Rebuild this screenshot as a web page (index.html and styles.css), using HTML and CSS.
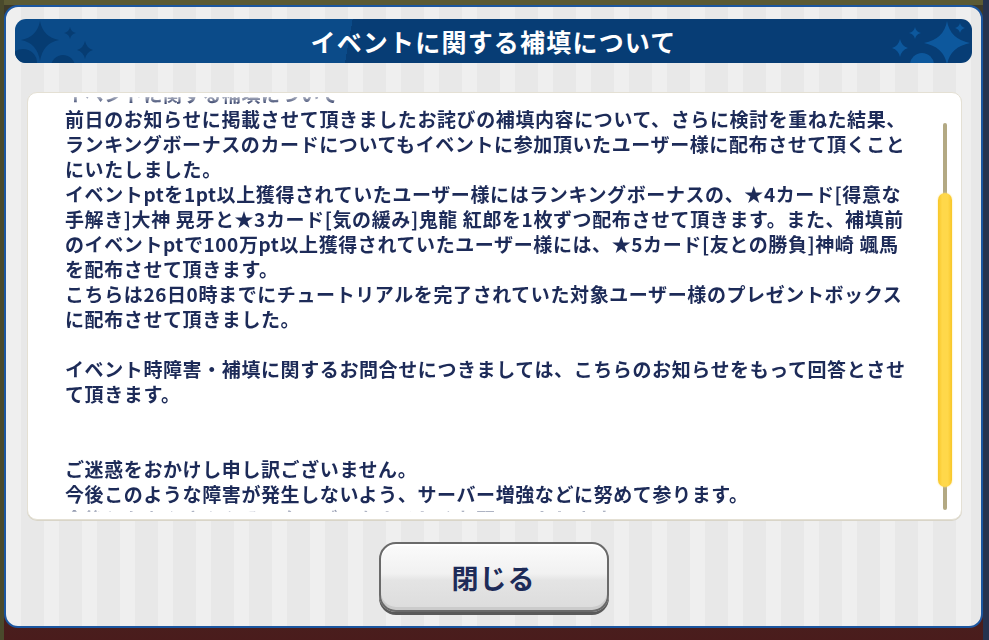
FILE: index.html
```html
<!DOCTYPE html>
<html lang="ja">
<head>
<meta charset="utf-8">
<title>イベントに関する補填について</title>
<link rel="stylesheet" href="styles.css">
</head>
<body>
<div class="scene">
  <div class="dialog">
    <div class="header">
      <svg class="sparkles" width="90" height="44" viewBox="0 0 90 44">
        <g fill="#063c72">
          <circle cx="8" cy="44" r="14"/>
          <circle cx="48" cy="48" r="12"/>
          <path d="M25 2 Q28 18 44 21 Q28 24 25 42 Q22 24 6 21 Q22 18 25 2Z"/>
          <path d="M55 8 Q56 13 61 14 Q56 15 55 20 Q54 15 49 14 Q54 13 55 8Z"/>
          <path d="M70 22 Q71.5 29 78 31 Q71.5 33 70 40 Q68.5 33 62 31 Q68.5 29 70 22Z"/>
        </g>
      </svg>
      <h1 class="title">イベントに関する補填について</h1>
      <svg class="sparkles" width="90" height="44" viewBox="0 0 90 44">
        <g fill="#0d589d">
          <circle cx="40" cy="46" r="12"/>
          <path d="M65 2 Q68 20 88 24 Q68 28 65 46 Q62 28 42 24 Q62 20 65 2Z"/>
          <path d="M33 8 Q34 13 39 14 Q34 15 33 20 Q32 15 27 14 Q32 13 33 8Z"/>
          <path d="M18 20 Q19.5 27 26 29 Q19.5 31 18 38 Q16.5 31 10 29 Q16.5 27 18 20Z"/>
          <path d="M78 4 Q79 8 83 9 Q79 10 78 14 Q77 10 73 9 Q77 8 78 4Z"/>
        </g>
      </svg>
    </div>

    <div class="panel">
      <div class="viewport">
        <div class="notice">
          イベントに関する補填について<br>
          前日のお知らせに掲載させて頂きましたお詫びの補填内容について、さらに検討を重ねた結果、<br>
          ランキングボーナスのカードについてもイベントに参加頂いたユーザー様に配布させて頂くこと<br>
          にいたしました。<br>
          イベントptを1pt以上獲得されていたユーザー様にはランキングボーナスの、★4カード[得意な<br>
          手解き]大神 晃牙と★3カード[気の緩み]鬼龍 紅郎を1枚ずつ配布させて頂きます。また、補填前<br>
          のイベントptで100万pt以上獲得されていたユーザー様には、★5カード[友との勝負]神崎 颯馬<br>
          を配布させて頂きます。<br>
          こちらは26日0時までにチュートリアルを完了されていた対象ユーザー様のプレゼントボックス<br>
          に配布させて頂きました。<br>
          <br>
          イベント時障害・補填に関するお問合せにつきましては、こちらのお知らせをもって回答とさせ<br>
          て頂きます。<br>
          <br>
          <br>
          ご迷惑をおかけし申し訳ございません。<br>
          今後このような障害が発生しないよう、サーバー増強などに努めて参ります。<br>
          今後ともあんさんぶるスターズ！をよろしくお願いいたします。
        </div>
      </div>
      <div class="scrollbar">
        <div class="track"></div>
        <div class="thumb"></div>
      </div>
    </div>

    <div class="footer">
      <button class="close-btn" type="button">閉じる</button>
    </div>
  </div>
</div>
</body>
</html>
```

FILE: styles.css
```css
html, body {
  margin: 0;
  padding: 0;
}

body {
  width: 989px;
  height: 640px;
  overflow: hidden;
  font-family: "Noto Sans CJK JP", "Noto Sans", sans-serif;
}

/* game scene showing around the modal */
.scene {
  width: 989px;
  height: 640px;
  padding: 5px 6px 0 4px;
  box-sizing: border-box;
  background:
    linear-gradient(90deg, #4a4a2c 0 4px, transparent 4px calc(100% - 6px), #26334f calc(100% - 6px)),
    linear-gradient(180deg, #5b5a34 0 5px, #3d3a2a 5px 60%, #4a1c1c 100%);
}

.dialog {
  width: 979px;
  height: 623px;
  box-sizing: border-box;
  border: 2px solid #1b56a0;
  border-radius: 14px;
  padding: 12px 9px 0 9px;
  background: repeating-linear-gradient(90deg, #efefef 0 15px, #e8e8e8 15px 38px);
  display: flex;
  flex-direction: column;
}

/* title bar */
.header {
  height: 44px;
  border-radius: 11px;
  background: linear-gradient(100deg, #0b4b89 0 35%, #073d75 35% 100%);
  display: flex;
  align-items: stretch;
  overflow: hidden;
  flex-shrink: 0;
}

.sparkles {
  flex: 0 0 90px;
  display: block;
}

.title {
  flex: 1;
  margin: 0;
  text-align: center;
  color: #ffffff;
  font-size: 25px;
  font-weight: 700;
  letter-spacing: 1.2px;
  line-height: 44px;
}

/* white message panel */
.panel {
  margin: 29px 10px 0 12px;
  height: 428px;
  box-sizing: border-box;
  background: #ffffff;
  border: 1px solid #e4e0d4;
  border-radius: 10px;
  box-shadow: 0 1px 0 #d9d5c8;
  display: flex;
  flex-shrink: 0;
}

.viewport {
  flex: 1;
  margin: 4px 0 0 37px;
  height: 415px;
  overflow: hidden;
  -webkit-mask-image: linear-gradient(180deg, rgba(0,0,0,0.35) 0, #000 8px, #000 calc(100% - 6px), rgba(0,0,0,0.3) 100%);
  mask-image: linear-gradient(180deg, rgba(0,0,0,0.35) 0, #000 8px, #000 calc(100% - 6px), rgba(0,0,0,0.3) 100%);
}

.notice {
  margin-top: -16px;
  color: #1d2b58;
  font-size: 19px;
  font-weight: 700;
  letter-spacing: 0.6px;
  line-height: 25px;
  white-space: nowrap;
}

.scrollbar {
  flex: 0 0 14px;
  margin: 30px 9px 9px 0;
  display: grid;
  grid-template: 1fr / 1fr;
}

.track {
  grid-area: 1 / 1;
  justify-self: center;
  width: 4px;
  border-radius: 2px;
  background: #b3a983;
}

.thumb {
  grid-area: 1 / 1;
  align-self: start;
  margin-top: 70px;
  width: 14px;
  height: 294px;
  border-radius: 7px;
  background: linear-gradient(90deg, #f8c628 0, #ffd84a 30%, #ffd84a 70%, #f8c628 100%);
  box-shadow: 0 0 2px #ffe38a;
}

.footer {
  display: flex;
  justify-content: center;
  padding-top: 22px;
}

.close-btn {
  width: 230px;
  height: 70px;
  box-sizing: border-box;
  border: 2px solid #6a6a6a;
  border-radius: 17px;
  background: linear-gradient(180deg, #fbfbfb 0, #f1f1f1 45%, #e4e4e4 55%, #dcdcdc 100%);
  box-shadow: inset 0 2px 0 #ffffff, inset 0 -3px 0 #cbcbcb, 0 3px 0 #5a5a5a;
  color: #1d2b58;
  font-family: "Noto Sans CJK JP", "Noto Sans", sans-serif;
  font-size: 27px;
  font-weight: 700;
  letter-spacing: 1px;
  padding: 0;
  cursor: pointer;
}
```
